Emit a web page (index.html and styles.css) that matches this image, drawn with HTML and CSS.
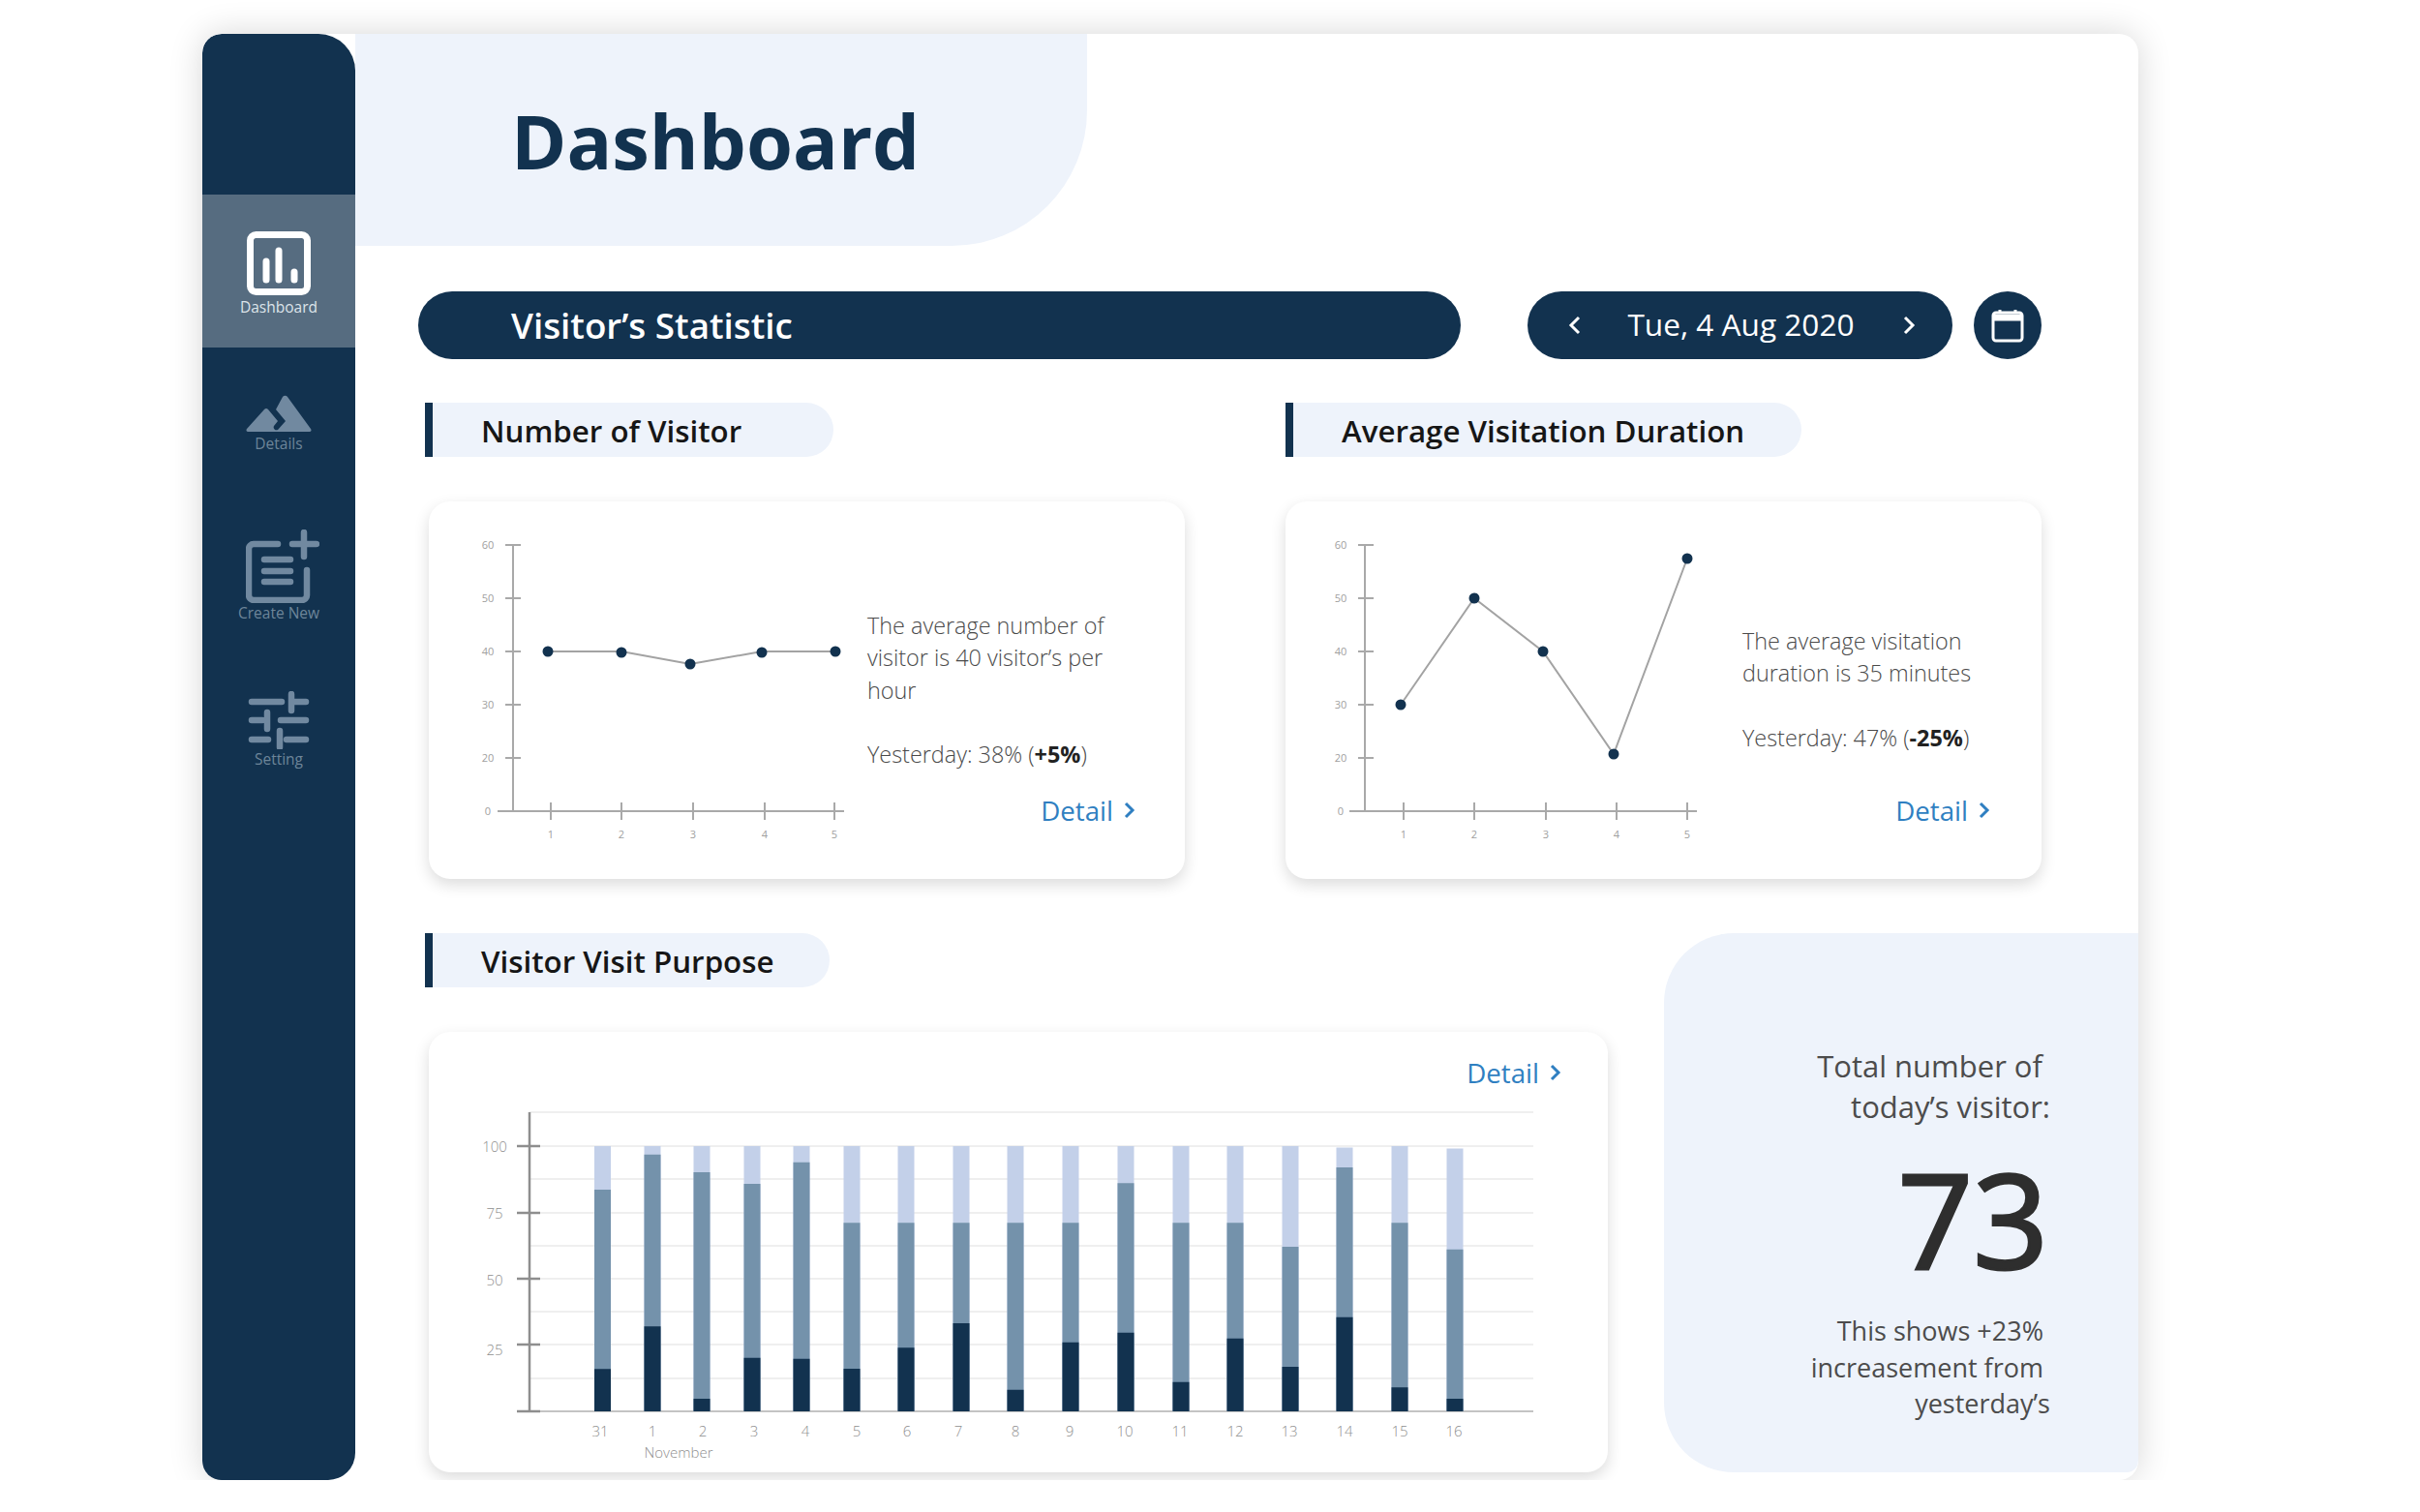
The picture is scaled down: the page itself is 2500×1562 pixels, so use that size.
FILE: index.html
```html
<!DOCTYPE html>
<html lang="en">
<head>
    <meta charset="UTF-8">
    <title>Dashboard</title>
    <link rel="stylesheet" href="styles.css">
</head>
<body>
    <div class="frame">
        <nav class="sidebar">
            <a class="nav-item active" href="#">
                <svg class="nav-icon" width="70" height="70" viewBox="0 0 70 70">
                    <rect x="5.5" y="5.5" width="59" height="59" rx="6" fill="none" stroke="#fff" stroke-width="7"/>
                    <path d="M22 33V52M35 22V52M51 44V52" fill="none" stroke="#fff" stroke-width="7" stroke-linecap="round"/>
                </svg>
                <span>Dashboard</span>
            </a>
            <a class="nav-item details" href="#">
                <svg class="nav-icon" width="70" height="42" viewBox="0 0 70 42">
                    <path d="M3 40a2 2 0 0 1-1-3L20 17a3 3 0 0 1 4 0L34 29l-4 5a3 3 0 0 0 4 4l8-9-10-12 7-13a3 3 0 0 1 5 0L68 37a2 2 0 0 1-1 3z" fill="#7189a0"/>
                </svg>
                <span>Details</span>
            </a>
            <a class="nav-item create" href="#">
                <svg class="nav-icon" width="76" height="76" viewBox="0 0 76 76">
                    <path d="M33 15H8a5 5 0 0 0-5 5v48a5 5 0 0 0 5 5h50a5 5 0 0 0 5-5V42" fill="none" stroke="#7189a0" stroke-width="6.5" stroke-linecap="round"/>
                    <path d="M19 31H46M19 43H46M19 54H46M48 15H73M60 3V28" fill="none" stroke="#7189a0" stroke-width="6.5" stroke-linecap="round"/>
                </svg>
                <span>Create New</span>
            </a>
            <a class="nav-item setting" href="#">
                <svg class="nav-icon" width="64" height="60" viewBox="0 0 64 60">
                    <path d="M4 11H35M45 3V20M47 11H60M4 30H15M20 22V39M34 30H60M4 50H21M33 41V58M40 50H60" fill="none" stroke="#7189a0" stroke-width="6.5" stroke-linecap="round"/>
                </svg>
                <span>Setting</span>
            </a>
        </nav>

        <main class="main">
            <header class="page-head">
                <h1>Dashboard</h1>
            </header>

            <div class="toolbar">
                <h2 class="stat-bar">Visitor’s Statistic</h2>
                <div class="date-pill">
                    <svg width="14" height="24" viewBox="0 0 14 24"><path d="M11 4 3 12l8 8" fill="none" stroke="#fff" stroke-width="3"/></svg>
                    <span>Tue, 4 Aug 2020</span>
                    <svg width="14" height="24" viewBox="0 0 14 24"><path d="m3 4 8 8-8 8" fill="none" stroke="#fff" stroke-width="3"/></svg>
                </div>
                <div class="cal-btn">
                    <svg width="34" height="36" viewBox="0 0 34 36">
                        <rect x="2" y="5" width="30" height="29" rx="3" fill="none" stroke="#fff" stroke-width="3"/>
                        <path d="M2 10H32" stroke="#fff" stroke-width="7"/>
                        <path d="M9 2V6M25 2V6" stroke="#fff" stroke-width="3"/>
                    </svg>
                </div>
            </div>

            <div class="stats-row">
                <section class="stat-col first">
                    <h3 class="tag tag-visitor">Number of Visitor</h3>
                    <div class="card line-card">
                        <svg class="chart" width="453" height="390" viewBox="443 518 453 390">
                            <g class="axis">
                                <path d="M530 563V838M514 838H872M522 563H538M522 618H538M522 673H538M522 728H538M522 783H538M569 829V847M642 829V847M716 829V847M790 829V847M862 829V847"/>
                            </g>
                            <g class="tick-label">
                                <text x="504" y="567">60</text><text x="504" y="622">50</text><text x="504" y="677">40</text><text x="504" y="732">30</text><text x="504" y="787">20</text><text x="504" y="842">0</text>
                                <text x="569" y="866">1</text><text x="642" y="866">2</text><text x="716" y="866">3</text><text x="790" y="866">4</text><text x="862" y="866">5</text>
                            </g>
                            <polyline class="trend" points="566,673 642,673 713,686 787,673 863,673"/>
                            <g class="dots">
                                <circle cx="566" cy="673" r="5.5"/><circle cx="642" cy="674" r="5.5"/><circle cx="713" cy="686" r="5.5"/><circle cx="787" cy="674" r="5.5"/><circle cx="863" cy="673" r="5.5"/>
                            </g>
                        </svg>
                        <div class="card-text text-visitor">
                            <p>The average number of visitor is 40 visitor’s per hour</p>
                            <p>Yesterday: 38% (<b>+5%</b>)</p>
                            <a class="detail" href="#">Detail
                                <svg width="12" height="20" viewBox="0 0 12 20"><path d="m2 3 7 7-7 7" fill="none" stroke="#2f7fc1" stroke-width="3"/></svg>
                            </a>
                        </div>
                    </div>
                </section>

                <section class="stat-col second">
                    <h3 class="tag tag-duration">Average Visitation Duration</h3>
                    <div class="card line-card">
                        <svg class="chart" width="472" height="390" viewBox="1328 518 472 390">
                            <g class="axis">
                                <path d="M1410 563V838M1394 838H1753M1403 563H1419M1403 618H1419M1403 673H1419M1403 728H1419M1403 783H1419M1450 829V847M1523 829V847M1597 829V847M1670 829V847M1743 829V847"/>
                            </g>
                            <g class="tick-label">
                                <text x="1385" y="567">60</text><text x="1385" y="622">50</text><text x="1385" y="677">40</text><text x="1385" y="732">30</text><text x="1385" y="787">20</text><text x="1385" y="842">0</text>
                                <text x="1450" y="866">1</text><text x="1523" y="866">2</text><text x="1597" y="866">3</text><text x="1670" y="866">4</text><text x="1743" y="866">5</text>
                            </g>
                            <polyline class="trend" points="1447,728 1523,618 1594,673 1667,779 1743,577"/>
                            <g class="dots">
                                <circle cx="1447" cy="728" r="5.5"/><circle cx="1523" cy="618" r="5.5"/><circle cx="1594" cy="673" r="5.5"/><circle cx="1667" cy="779" r="5.5"/><circle cx="1743" cy="577" r="5.5"/>
                            </g>
                        </svg>
                        <div class="card-text text-duration">
                            <p>The average visitation duration is 35 minutes</p>
                            <p>Yesterday: 47% (<b>-25%</b>)</p>
                            <a class="detail" href="#">Detail
                                <svg width="12" height="20" viewBox="0 0 12 20"><path d="m2 3 7 7-7 7" fill="none" stroke="#2f7fc1" stroke-width="3"/></svg>
                            </a>
                        </div>
                    </div>
                </section>
            </div>

            <div class="bottom-row">
                <section class="purpose">
                    <h3 class="tag tag-purpose">Visitor Visit Purpose</h3>
                    <div class="card bar-card">
                        <a class="detail" href="#">Detail
                            <svg width="12" height="20" viewBox="0 0 12 20"><path d="m2 3 7 7-7 7" fill="none" stroke="#2f7fc1" stroke-width="3"/></svg>
                        </a>
                        <svg class="chart" width="1218" height="393" viewBox="443 1128 1218 393">
                            <path class="grid" d="M547 1149H1584M547 1184H1584M547 1218H1584M547 1253H1584M547 1287H1584M547 1321H1584M547 1355H1584M547 1389H1584M547 1424H1584"/>
                            <path class="base" d="M534 1458H1584"/>
                            <path class="bar-light" d="M622.5 1458V1184M674 1458V1184M725 1458V1184M777 1458V1184M828 1458V1184M880 1458V1184M936 1458V1184M993 1458V1184M1049 1458V1184M1106 1458V1184M1163 1458V1184M1220 1458V1184M1276 1458V1184M1333 1458V1184M1389 1458V1185.5M1446 1458V1184M1503 1458V1186.5"/>
                            <path class="bar-mid" d="M622.5 1458V1229M674 1458V1192.7M725 1458V1211M777 1458V1223M828 1458V1200.7M880 1458V1263.3M936 1458V1263.3M993 1458V1263.3M1049 1458V1263.3M1106 1458V1263.3M1163 1458V1222.3M1220 1458V1263.3M1276 1458V1263.3M1333 1458V1288M1389 1458V1206M1446 1458V1263.3M1503 1458V1290.7"/>
                            <path class="bar-dark" d="M622.5 1458V1414.3M674 1458V1370.3M725 1458V1445M777 1458V1402.7M828 1458V1403.7M880 1458V1414M936 1458V1392.3M993 1458V1367M1049 1458V1435.7M1106 1458V1386.7M1163 1458V1376.7M1220 1458V1427.7M1276 1458V1382.7M1333 1458V1412M1389 1458V1360.7M1446 1458V1433.3M1503 1458V1445"/>
                            <path class="y-axis" d="M547 1149V1458M534 1184H558M534 1253H558M534 1321H558M534 1389H558M534 1458H558"/>
                            <g class="bar-label">
                                <text x="511" y="1190">100</text><text x="511" y="1259">75</text><text x="511" y="1328">50</text><text x="511" y="1400">25</text>
                                <text x="620" y="1484">31</text><text x="674" y="1484">1</text><text x="726" y="1484">2</text><text x="779" y="1484">3</text><text x="832" y="1484">4</text><text x="885" y="1484">5</text><text x="937" y="1484">6</text><text x="990" y="1484">7</text><text x="1049" y="1484">8</text><text x="1105" y="1484">9</text><text x="1162" y="1484">10</text><text x="1219" y="1484">11</text><text x="1276" y="1484">12</text><text x="1332" y="1484">13</text><text x="1389" y="1484">14</text><text x="1446" y="1484">15</text><text x="1502" y="1484">16</text>
                                <text x="701" y="1506">November</text>
                            </g>
                        </svg>
                    </div>
                </section>

                <aside class="total-panel">
                    <p class="total-title">Total number of&nbsp;<br>today’s visitor:</p>
                    <p class="total-num">73</p>
                    <p class="total-note">This shows +23%&nbsp;<br>increasement from&nbsp;<br>yesterday’s</p>
                </aside>
            </div>
        </main>
    </div>
</body>
</html>
```

FILE: styles.css
```css
body {
    font-family: 'Open Sans', 'Noto Sans', sans-serif;
    margin: 0;
    padding: 35px 0 0 209px;
    background: #fff;
    color: #222;
}
h1, h2, h3, p {
    margin: 0;
}
a {
    text-decoration: none;
}
.frame {
    display: flex;
    width: 2000px;
    height: 1494px;
    background: #fff;
    border-radius: 20px;
    box-shadow: 0 0 35px rgba(0, 0, 0, 0.16);
    overflow: hidden;
}

/* sidebar */
.sidebar {
    width: 158px;
    flex: none;
    background: #12324f;
    border-radius: 20px 38px 28px 18px;
    padding-top: 166px;
    box-sizing: border-box;
}
.nav-item {
    display: flex;
    flex-direction: column;
    align-items: center;
    color: #6d8599;
    font-size: 15.5px;
    line-height: 20px;
}
.nav-icon {
    display: block;
}
.nav-item.active {
    height: 158px;
    background: #566c80;
    color: #dde4ea;
    padding-top: 36px;
    box-sizing: border-box;
}
.nav-item.details {
    margin-top: 47px;
}
.nav-item.create {
    margin-top: 79px;
}
.nav-item.create .nav-icon {
    margin-left: 8px;
}
.nav-item.setting {
    margin-top: 71px;
}

/* main column */
.main {
    flex: 1;
    min-width: 0;
}
.page-head {
    width: 756px;
    height: 219px;
    box-sizing: border-box;
    background: #eef3fb;
    border-bottom-right-radius: 140px;
    padding: 55px 0 0 161px;
}
h1 {
    font-size: 77.6px;
    line-height: 110px;
    font-weight: 700;
    color: #12324f;
}
.toolbar {
    display: flex;
    align-items: center;
    margin: 47px 0 0 65px;
}
.stat-bar {
    width: 1077px;
    height: 70px;
    box-sizing: border-box;
    background: #12324f;
    border-radius: 35px;
    color: #fff;
    font-size: 36.8px;
    font-weight: 600;
    line-height: 70px;
    padding-left: 96px;
}
.date-pill {
    width: 439px;
    height: 70px;
    box-sizing: border-box;
    margin-left: 69px;
    padding: 0 38px 0 42px;
    background: #12324f;
    border-radius: 35px;
    color: #fff;
    font-size: 31.6px;
    display: flex;
    align-items: center;
    justify-content: space-between;
}
.date-pill span {
    margin: 0 2px 3px 0;
}
.cal-btn {
    width: 70px;
    height: 70px;
    margin-left: 22px;
    border-radius: 50%;
    background: #12324f;
    display: flex;
    align-items: center;
    justify-content: center;
}

/* section tags */
.tag {
    height: 56px;
    box-sizing: border-box;
    border-left: 8px solid #12324f;
    border-radius: 0 28px 28px 0;
    background: #eef3fb;
    color: #161616;
    font-size: 31.3px;
    font-weight: 600;
    line-height: 58px;
    padding-left: 50px;
}
.tag-visitor {
    width: 422px;
}
.tag-duration {
    width: 533px;
}
.tag-purpose {
    width: 418px;
}

/* cards */
.card {
    background: #fff;
    border-radius: 22px;
    box-shadow: 0 6px 16px rgba(0, 0, 0, 0.14);
}
.stats-row {
    display: flex;
    margin: 45px 0 0 72px;
}
.stat-col.first {
    width: 889px;
}
.line-card {
    display: flex;
    width: 781px;
    height: 390px;
    margin-top: 46px;
}
.first .line-card {
    margin-left: 4px;
}
.chart {
    display: block;
    flex: none;
}
.card-text {
    flex: 1;
    display: flex;
    flex-direction: column;
    font-size: 23.4px;
    font-weight: 300;
    line-height: 33.4px;
    color: #4a4a4a;
    padding-bottom: 51px;
}
.card-text p + p {
    margin-top: 33px;
}
.card-text b {
    font-weight: 700;
    color: #222;
}
.text-visitor {
    padding-top: 112px;
    padding-right: 70px;
}
.text-duration {
    padding-top: 128px;
    padding-right: 60px;
}
.detail {
    display: flex;
    align-items: center;
    gap: 11px;
    color: #2f7fc1;
    font-size: 27.7px;
    line-height: 40px;
}
.card-text .detail {
    margin-top: auto;
    align-self: flex-end;
    margin-right: -19px;
    font-weight: 400;
}
.text-duration .detail {
    margin-right: -7px;
}

/* chart parts */
.axis path {
    fill: none;
    stroke: #a9a9a9;
    stroke-width: 2;
}
.tick-label text {
    font-size: 11px;
    fill: #a0a0a0;
    text-anchor: middle;
}
.trend {
    fill: none;
    stroke: #a3a3a3;
    stroke-width: 2;
}
.dots circle {
    fill: #12324f;
}
.grid {
    fill: none;
    stroke: #efefef;
    stroke-width: 2;
}
.base {
    stroke: #c4c4c4;
    stroke-width: 2;
}
.y-axis {
    fill: none;
    stroke: #8e8e8e;
    stroke-width: 2.5;
}
.bar-light, .bar-mid, .bar-dark {
    fill: none;
    stroke-width: 17;
}
.bar-light {
    stroke: #c3d0e9;
}
.bar-mid {
    stroke: #7492ab;
}
.bar-dark {
    stroke: #12324f;
}
.bar-label text {
    font-size: 15px;
    font-weight: 300;
    fill: #8f8f8f;
    text-anchor: middle;
}

/* bottom row */
.bottom-row {
    display: flex;
    justify-content: space-between;
    margin: 56px 0 0 72px;
}
.bar-card {
    width: 1218px;
    height: 455px;
    margin: 46px 0 0 4px;
    display: flex;
    flex-direction: column;
}
.bar-card .detail {
    align-self: flex-end;
    margin: 22px 48px 0 0;
}
.total-panel {
    width: 490px;
    height: 557px;
    box-sizing: border-box;
    background: #eef3fb;
    border-radius: 72px 0 12px 72px;
    padding: 116px 91px 0 0;
    text-align: right;
    color: #4c4c4c;
}
.total-title {
    font-size: 31px;
    line-height: 42px;
}
.total-num {
    font-size: 136px;
    font-weight: 500;
    -webkit-text-stroke: 3px #2e2e2e;
    line-height: 150px;
    color: #2e2e2e;
    margin-top: 20px;
    padding-right: 2px;
}
.total-note {
    font-size: 27px;
    line-height: 37.5px;
    margin-top: 22px;
}
```
